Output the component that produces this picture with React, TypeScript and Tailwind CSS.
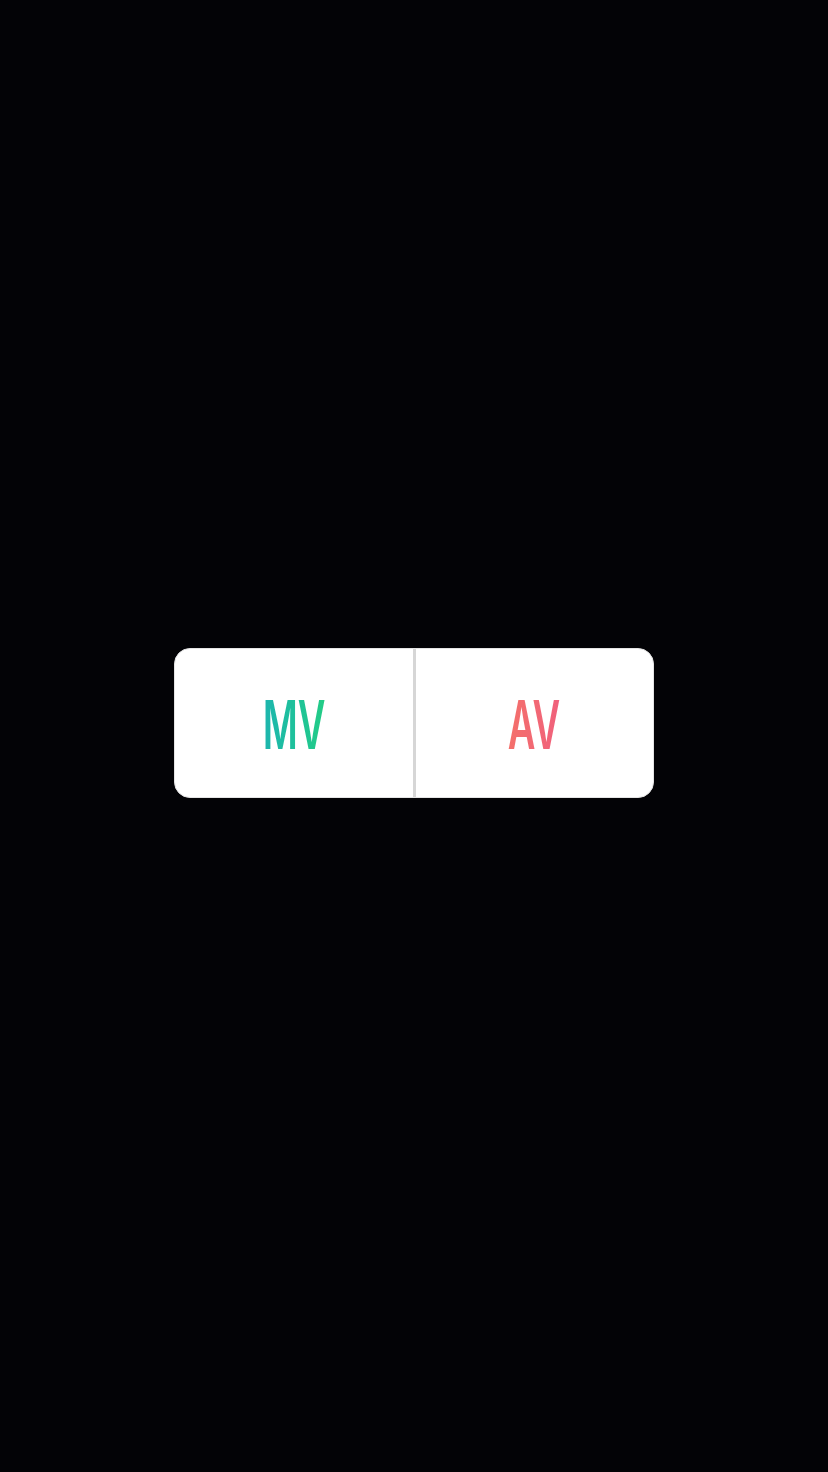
export default function App() {
  return (
    <div className="w-[828px] h-[1472px] bg-[#030306] pt-[648px]">
      <div className="mx-auto w-[480px] h-[150px] bg-white rounded-[16px] flex overflow-hidden border border-[#e4e4e4]">
        <div className="flex-1 flex items-center justify-center">
          <span
            className="inline-block mt-[2px] scale-x-[0.56] text-[68px] font-semibold leading-none bg-gradient-to-r from-[#1db5ae] to-[#23cc85] bg-clip-text text-transparent"
            style={{ fontFamily: 'Inter, sans-serif' }}
          >
            MV
          </span>
        </div>
        <div className="w-[3px] bg-[#d6d6d6]" />
        <div className="flex-1 flex items-center justify-center">
          <span
            className="inline-block mt-[2px] scale-x-[0.56] text-[68px] font-semibold leading-none bg-gradient-to-r from-[#f4706a] to-[#f0607c] bg-clip-text text-transparent"
            style={{ fontFamily: 'Inter, sans-serif' }}
          >
            AV
          </span>
        </div>
      </div>
    </div>
  );
}
